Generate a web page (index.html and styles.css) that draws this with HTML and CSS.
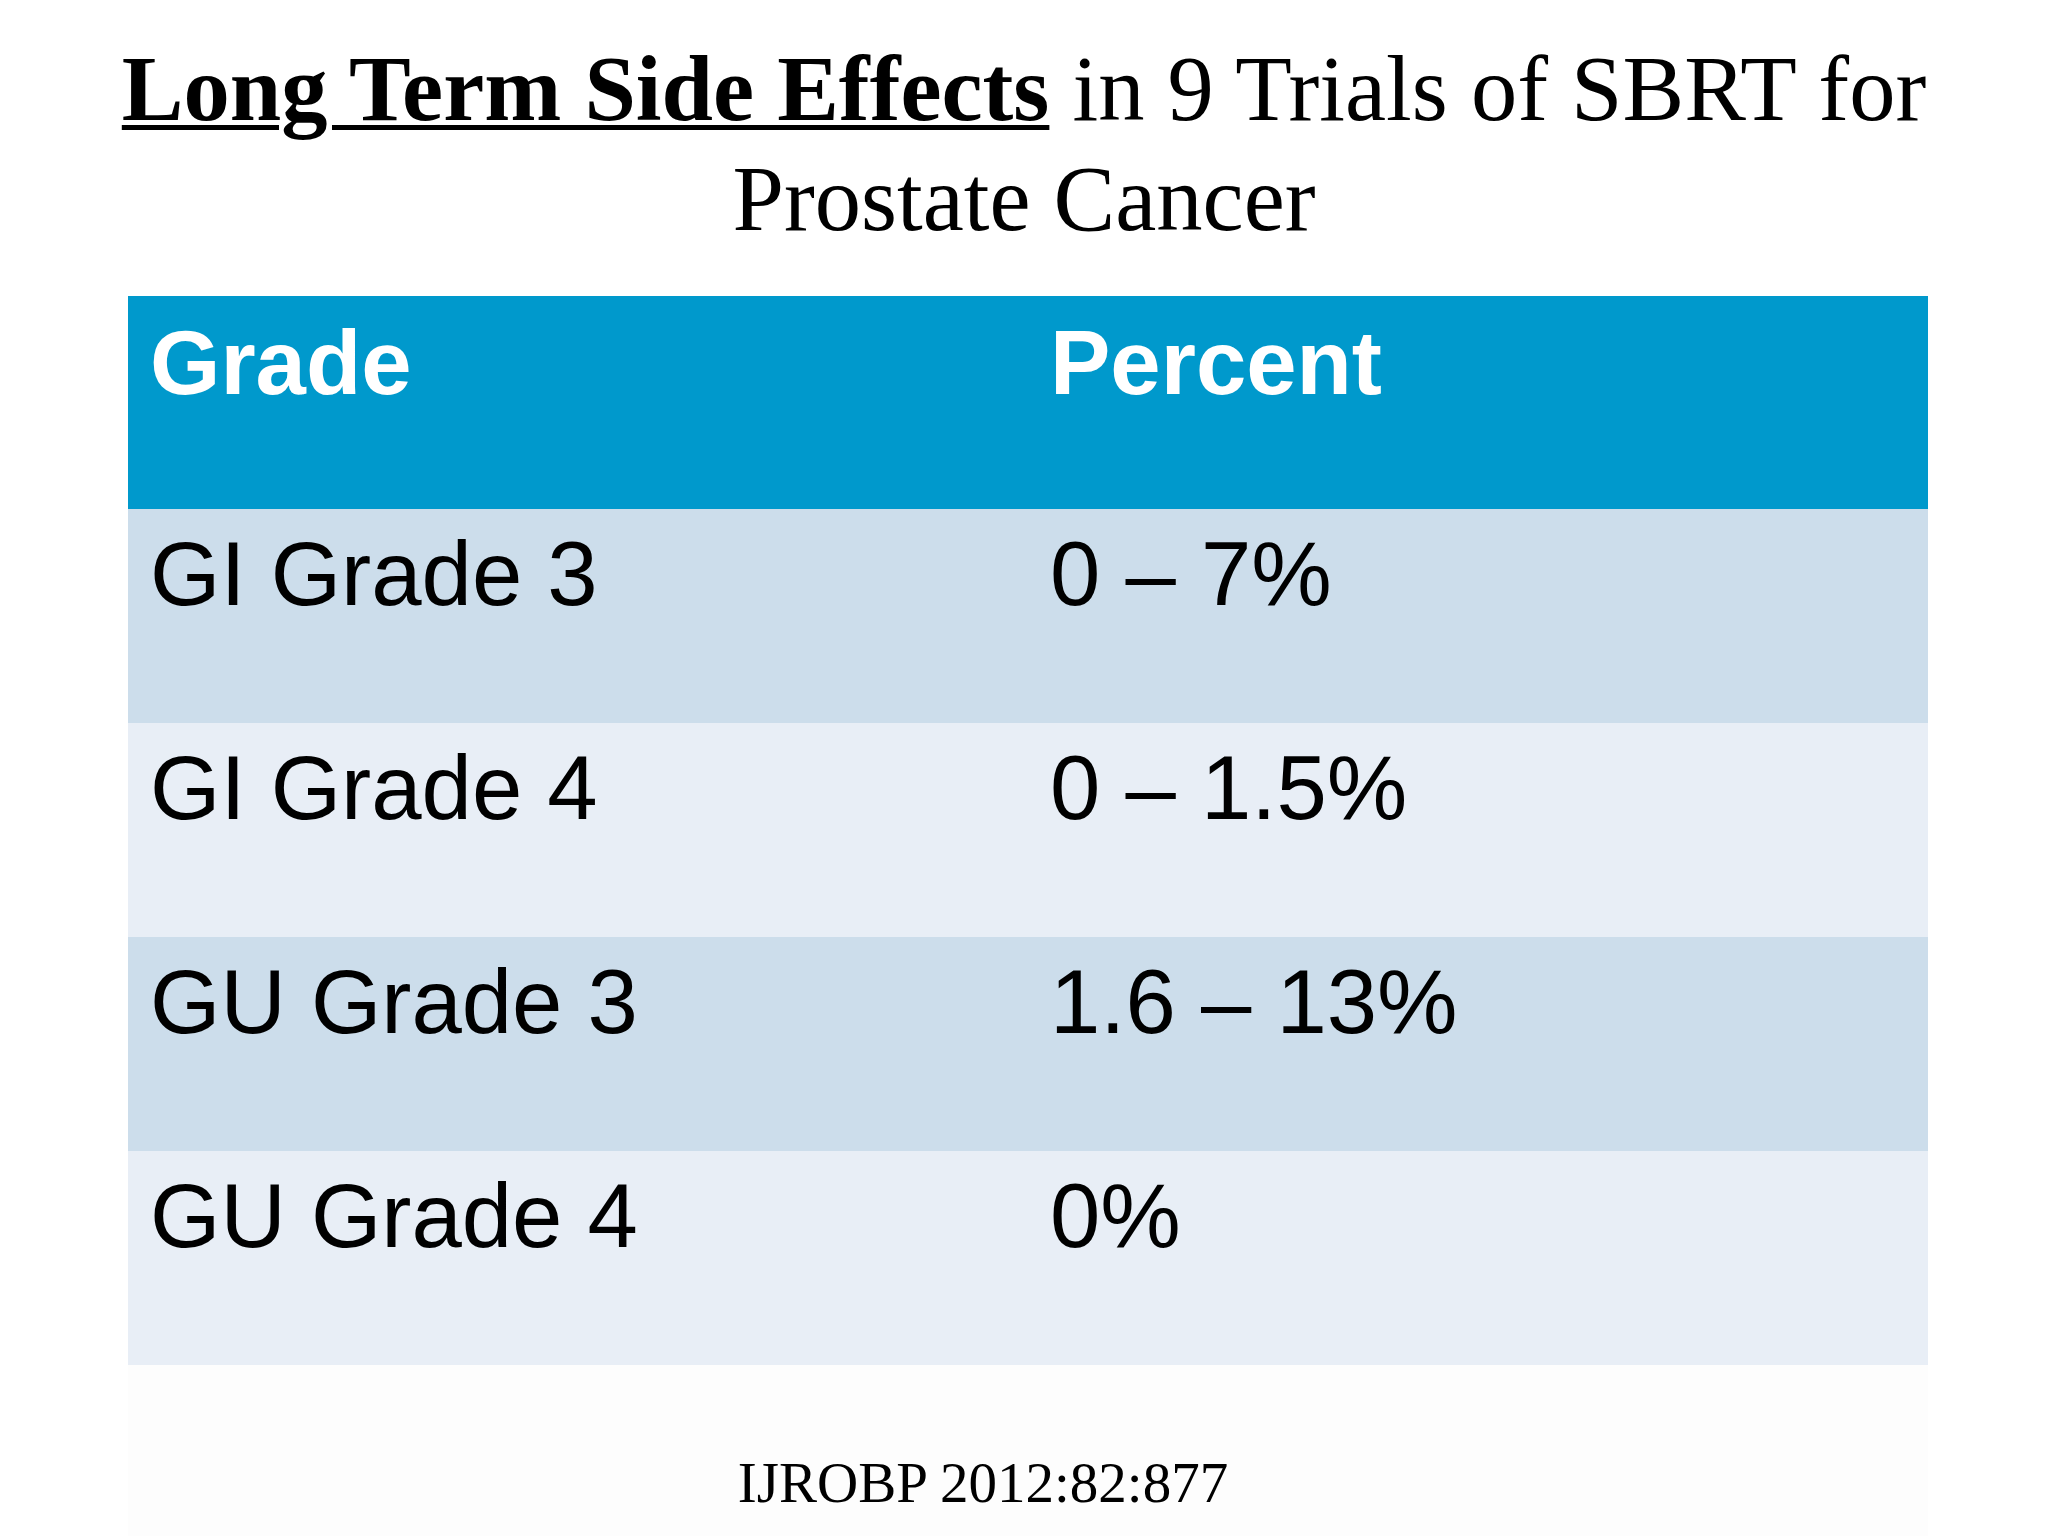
FILE: index.html
```html
<!DOCTYPE html>
<html lang="en">
<head>
<meta charset="utf-8">
<title>Long Term Side Effects in 9 Trials of SBRT for Prostate Cancer</title>
<link rel="stylesheet" href="styles.css">
</head>
<body>
<div class="slide">
  <h1 class="title"><span class="title-em">Long Term Side Effects</span> in 9 Trials of SBRT for<br>Prostate Cancer</h1>
  <div class="table">
    <div class="row head">
      <div class="cell">Grade</div>
      <div class="cell">Percent</div>
    </div>
    <div class="row odd">
      <div class="cell">GI Grade 3</div>
      <div class="cell">0 – 7%</div>
    </div>
    <div class="row even">
      <div class="cell">GI Grade 4</div>
      <div class="cell">0 – 1.5%</div>
    </div>
    <div class="row odd">
      <div class="cell">GU Grade 3</div>
      <div class="cell">1.6 – 13%</div>
    </div>
    <div class="row even">
      <div class="cell">GU Grade 4</div>
      <div class="cell">0%</div>
    </div>
  </div>
  <div class="footer">IJROBP 2012:82:877</div>
</div>
</body>
</html>
```

FILE: styles.css
```css
html, body {
  margin: 0;
  padding: 0;
  background: #ffffff;
}

.slide {
  width: 2048px;
  height: 1536px;
  overflow: hidden;
  display: flex;
  flex-direction: column;
  align-items: flex-start;
}

.title {
  align-self: stretch;
  margin: 34px 0 0 0;
  font-family: "Liberation Serif", "Times New Roman", serif;
  font-weight: normal;
  font-size: 92.5px;
  line-height: 110px;
  text-align: center;
  color: #000000;
  white-space: nowrap;
}

.title-em {
  font-weight: bold;
  text-decoration: underline;
  text-decoration-thickness: 5px;
  text-underline-offset: 5px;
}

.table {
  margin: 42px 0 0 128px;
  width: 1800px;
  display: grid;
  grid-template-rows: 213px 214px 214px 214px 214px;
}

.row {
  display: grid;
  grid-template-columns: 900px 900px;
}

.cell {
  padding: 13px 0 0 22px;
  font-family: "Liberation Sans", Arial, sans-serif;
  font-size: 90.5px;
  line-height: 1.15;
  color: #000000;
  white-space: nowrap;
}

.head {
  background: #0099cc;
}

.head .cell {
  color: #ffffff;
  font-weight: bold;
  padding-top: 15px;
}

.odd {
  background: #ccddeb;
}

.even {
  background: #e8eef6;
}

.footer {
  margin-left: 128px;
  width: 1800px;
  flex: 1;
  box-sizing: border-box;
  background: #fdfdfd;
  padding: 89px 90px 0 0;
  font-family: "Liberation Serif", "Times New Roman", serif;
  font-size: 57px;
  line-height: 1;
  text-align: center;
  color: #000000;
}
```
